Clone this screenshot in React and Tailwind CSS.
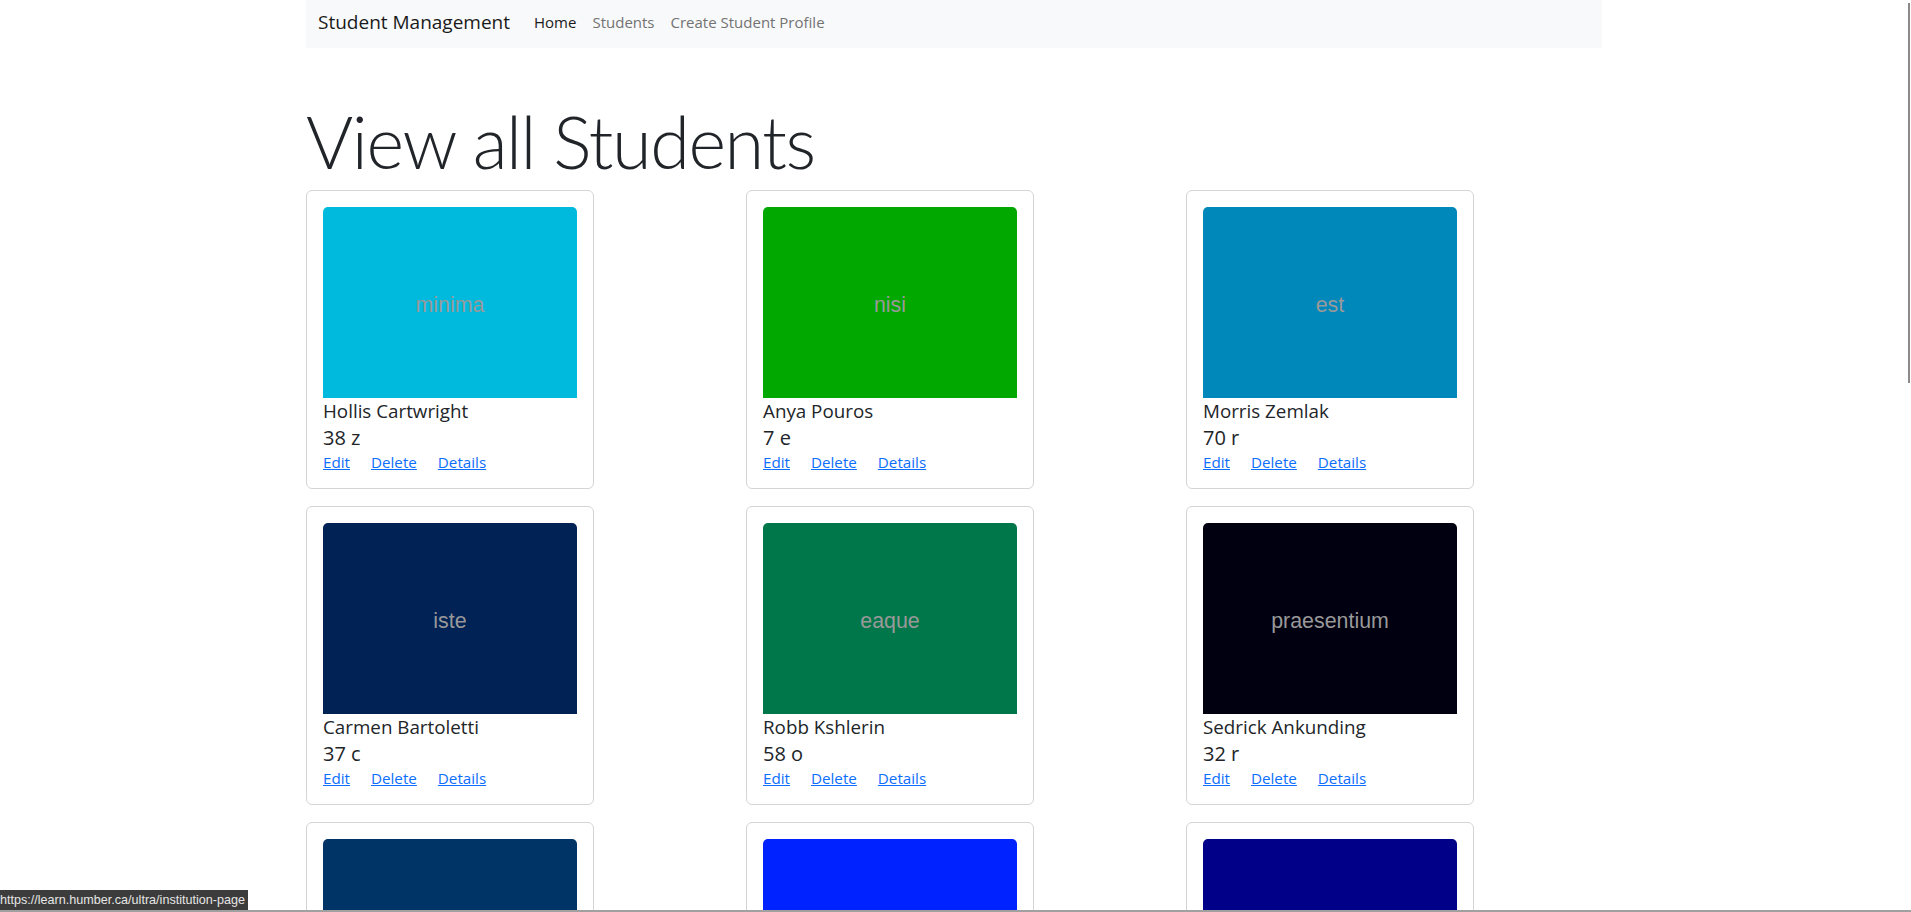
import React from "react";

const students = [
  { name: "Hollis Cartwright", age: "38 z", word: "minima", color: "bg-[#00bade]" },
  { name: "Anya Pouros", age: "7 e", word: "nisi", color: "bg-[#00a800]" },
  { name: "Morris Zemlak", age: "70 r", word: "est", color: "bg-[#0088bb]" },
  { name: "Carmen Bartoletti", age: "37 c", word: "iste", color: "bg-[#002255]" },
  { name: "Robb Kshlerin", age: "58 o", word: "eaque", color: "bg-[#00774a]" },
  { name: "Sedrick Ankunding", age: "32 r", word: "praesentium", color: "bg-[#000011]" },
  { name: "Lina Schowalter", age: "24 k", word: "omnis", color: "bg-[#003366]" },
  { name: "Dewitt Hauck", age: "45 a", word: "quia", color: "bg-[#0022ff]" },
  { name: "Maggie Rempel", age: "19 t", word: "odio", color: "bg-[#000088]" },
];

const StudentCard = ({ student }) => {
  return (
    <div className="w-72 rounded-[6px] border border-[#d4d4d4] bg-white p-4">
      <div
        className={`flex h-[190.5px] w-full items-center justify-center rounded-t-[5px] pt-[6px] font-['Liberation_Sans',Arial,sans-serif] text-[21.4px] text-[#999999] ${student.color}`}
      >
        {student.word}
      </div>
      <div className="text-[18.8px] leading-[26px] text-[#212529]">{student.name}</div>
      <div className="text-[20px] leading-[28.5px] text-[#212529]">{student.age}</div>
      <div className="flex gap-[21px] text-[15.2px] leading-[20px]">
        <a href="#" className="text-[#0d6efd] underline">Edit</a>
        <a href="#" className="text-[#0d6efd] underline">Delete</a>
        <a href="#" className="text-[#0d6efd] underline">Details</a>
      </div>
    </div>
  );
};

const App = () => {
  return (
    <div className="relative h-screen overflow-hidden bg-white pr-[3px] font-['Open_Sans',sans-serif]">
      <div className="mx-auto w-[1296px]">
        {/* Navbar */}
        <nav className="flex h-12 items-center bg-[#f8f9fa] px-3 pb-[5px]">
          <span className="mr-4 shrink-0 whitespace-nowrap text-[19px] leading-[30px] text-[#1a1a1a]">
            Student Management
          </span>
          <div className="flex text-[15px] leading-6">
            <a href="#" className="px-2 text-[#1a1a1a]">Home</a>
            <a href="#" className="px-2 text-[#737373]">Students</a>
            <a href="#" className="px-2 text-[#737373]">Create Student Profile</a>
          </div>
        </nav>

        <h1 className="mt-[50px] mb-[6px] font-['Lato',sans-serif] text-[72px] font-light leading-[86px] tracking-[-1.4px] text-[#212529]">
          View all Students
        </h1>

        <div className="grid grid-cols-[288px_288px_288px] gap-x-[152px] gap-y-[17px]">
          {students.map((s, i) => (
            <StudentCard key={i} student={s} />
          ))}
        </div>
      </div>

      {/* browser status bubble */}
      <div className="absolute bottom-[2px] left-0 h-5 bg-[#3c3c3c] pr-[3px] font-['Liberation_Sans',Arial,sans-serif] text-[12.6px] leading-5 text-[#e6e6e6]">
        https://learn.humber.ca/ultra/institution-page
      </div>
      <div className="absolute bottom-0 left-0 h-[2px] w-full bg-[#a0a0a0]" />
      {/* overlay scrollbar thumb */}
      <div className="absolute right-[1px] top-[3px] h-[380px] w-[2px] bg-[#8a8a8a]" />
    </div>
  );
};

export default App;
